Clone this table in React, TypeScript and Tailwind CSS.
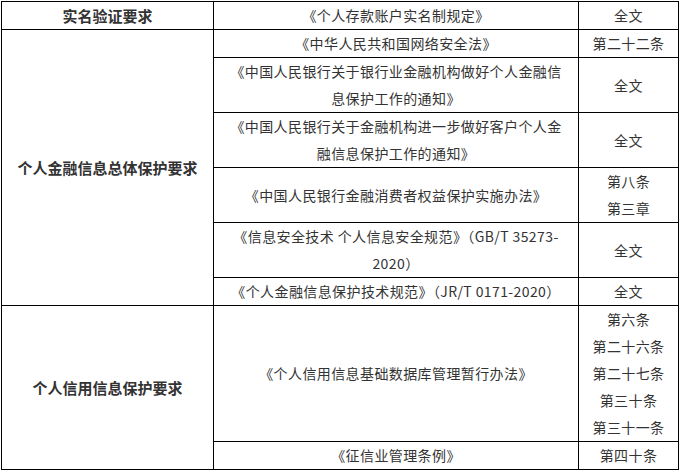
const td = "border border-black text-center align-middle px-2 py-0";

const generalRows: { doc: React.ReactNode; art: React.ReactNode }[] = [
  { doc: "《中华人民共和国网络安全法》", art: "第二十二条" },
  {
    doc: (
      <>
        《中国人民银行关于银行业金融机构做好个人金融信
        <br />
        息保护工作的通知》
      </>
    ),
    art: "全文",
  },
  {
    doc: (
      <>
        《中国人民银行关于金融机构进一步做好客户个人金
        <br />
        融信息保护工作的通知》
      </>
    ),
    art: "全文",
  },
  {
    doc: "《中国人民银行金融消费者权益保护实施办法》",
    art: (
      <>
        第八条
        <br />
        第三章
      </>
    ),
  },
  {
    doc: (
      <>
        《信息安全技术 个人信息安全规范》（GB/T 35273-
        <br />
        2020）
      </>
    ),
    art: "全文",
  },
  { doc: "《个人金融信息保护技术规范》（JR/T 0171-2020）", art: "全文" },
];

export default function App() {
  return (
    <div
      className="bg-white w-[679px] h-[471px] pl-[1px] pt-[1px] text-[#333] text-[14px] leading-[27px] tracking-[0.4px]"
      style={{ fontFamily: '"Noto Sans CJK SC", "Noto Sans", sans-serif' }}
    >
      <table className="border-collapse w-[677px] table-fixed">
        <colgroup>
          <col className="w-[212px]" />
          <col className="w-[365px]" />
          <col className="w-[100px]" />
        </colgroup>
        <tbody>
          <tr>
            <td className={`${td} font-bold text-[15px] tracking-normal`}>实名验证要求</td>
            <td className={td}>《个人存款账户实名制规定》</td>
            <td className={td}>全文</td>
          </tr>
          {generalRows.map((r, i) => (
            <tr key={i}>
              {i === 0 && (
                <td rowSpan={generalRows.length} className={`${td} font-bold text-[15px] tracking-normal`}>
                  个人金融信息总体保护要求
                </td>
              )}
              <td className={td}>{r.doc}</td>
              <td className={td}>{r.art}</td>
            </tr>
          ))}
          <tr>
            <td rowSpan={2} className={`${td} font-bold text-[15px] tracking-normal`}>
              个人信用信息保护要求
            </td>
            <td className={td}>《个人信用信息基础数据库管理暂行办法》</td>
            <td className={td}>
              第六条
              <br />
              第二十六条
              <br />
              第二十七条
              <br />
              第三十条
              <br />
              第三十一条
            </td>
          </tr>
          <tr>
            <td className={td}>《征信业管理条例》</td>
            <td className={td}>第四十条</td>
          </tr>
        </tbody>
      </table>
    </div>
  );
}
